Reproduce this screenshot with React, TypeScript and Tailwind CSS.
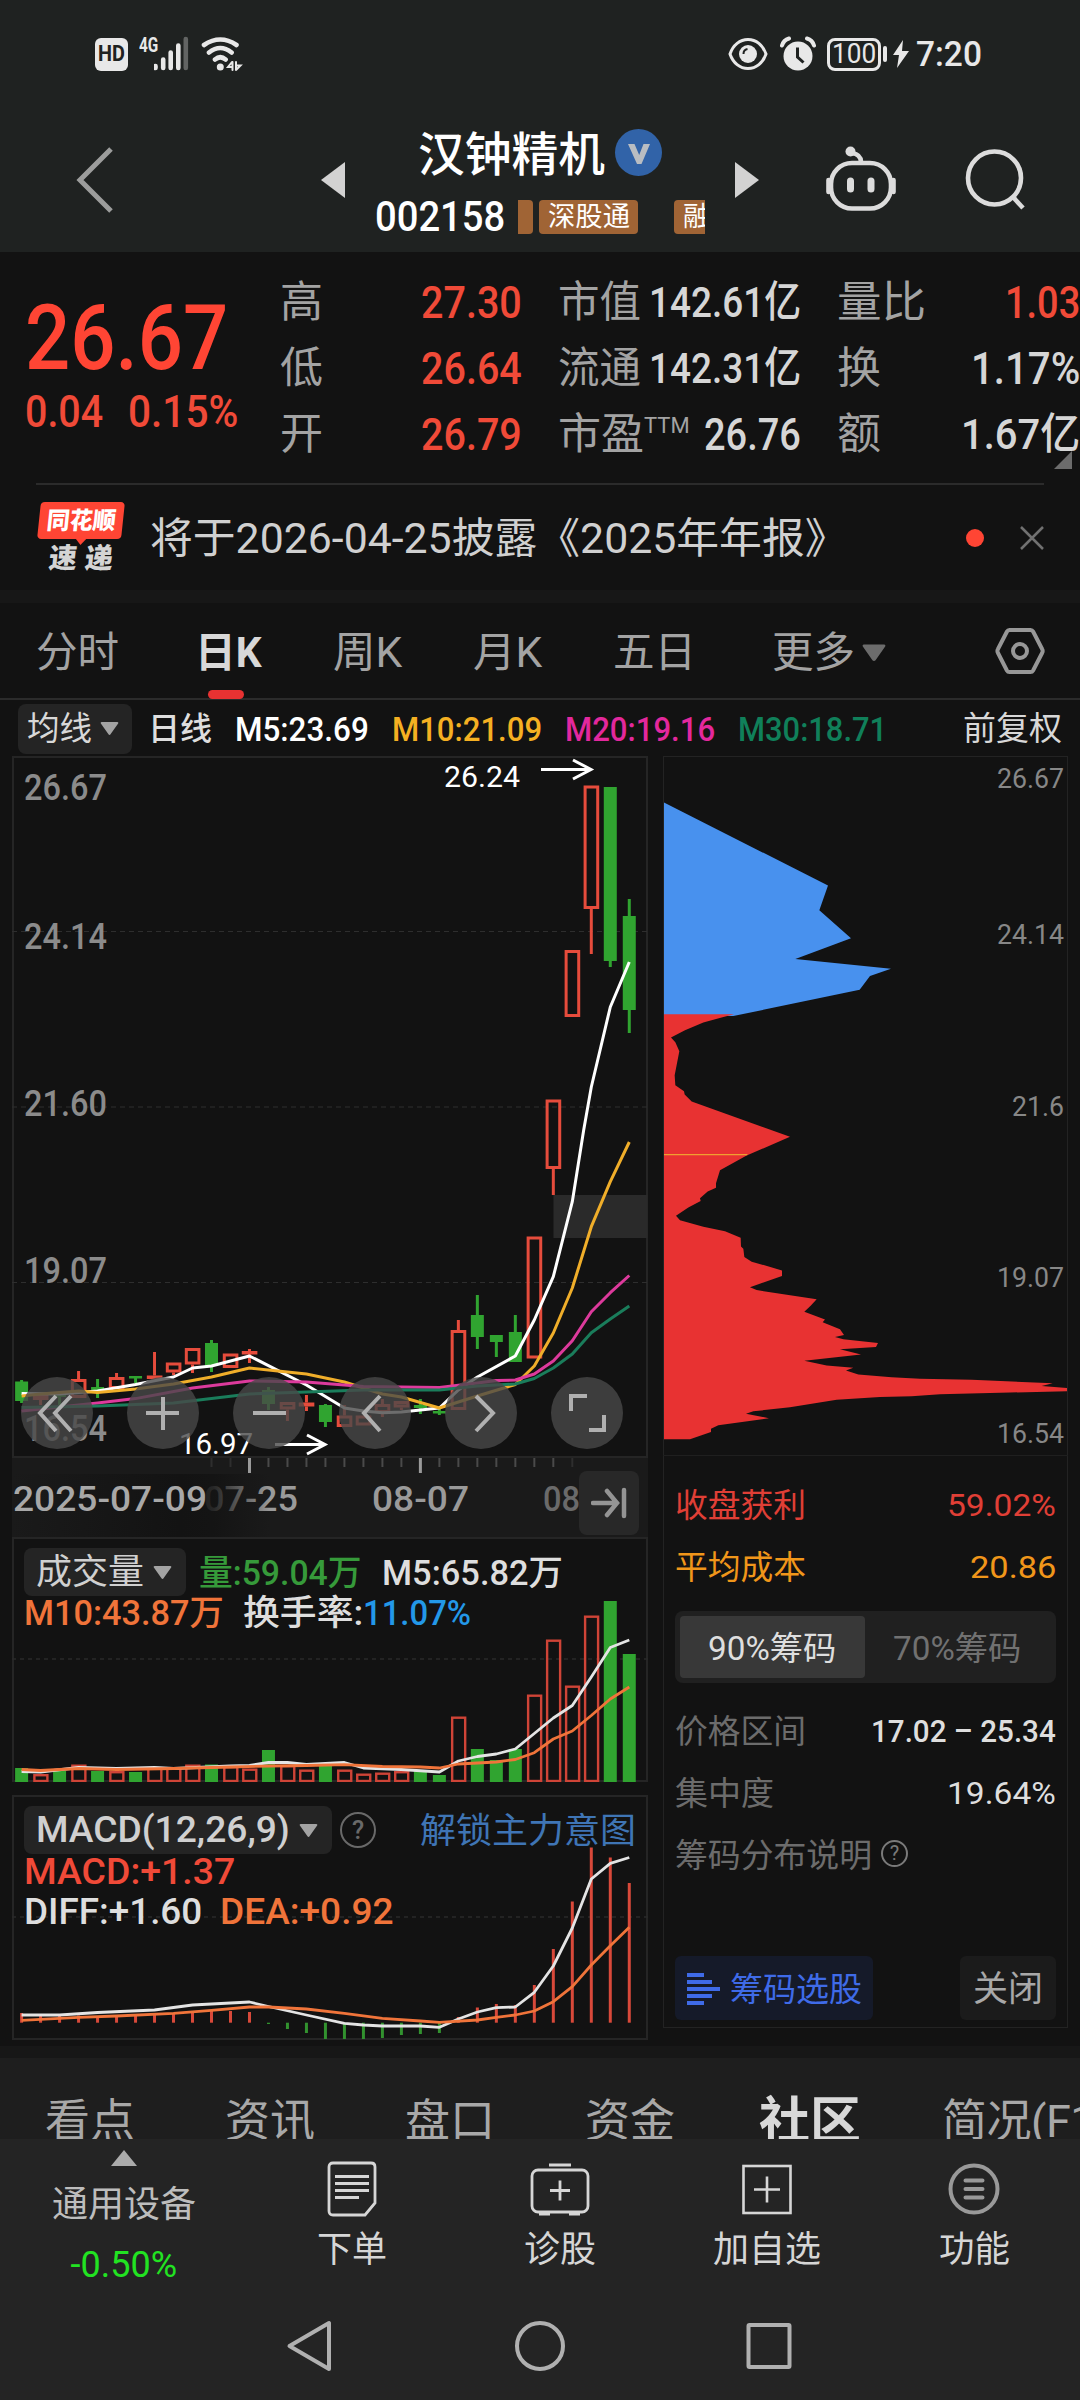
import React, { useLayoutEffect, useRef, useState } from 'react';

interface FitProps {
  className?: string;
  children: React.ReactNode;
}

// Condenses or widens its text to fill the width given by the class
const Fit = ({ className = '', children }: FitProps) => {
  const outer = useRef<HTMLSpanElement>(null);
  const inner = useRef<HTMLSpanElement>(null);
  const [scale, setScale] = useState(1);

  useLayoutEffect(() => {
    if (outer.current && inner.current && inner.current.offsetWidth) {
      setScale(outer.current.clientWidth / inner.current.offsetWidth);
    }
  }, [children]);

  return (
    <span ref={outer} className={`flex shrink-0 leading-none ${className}`}>
      <span ref={inner} className="shrink-0 origin-left whitespace-nowrap leading-none" style={{ transform: `scaleX(${scale})` }}>
        {children}
      </span>
    </span>
  );
};

const RED = '#e64c3c';
const GREEN = '#30a430';

const cx = (i: number) => 21.6 + i * 18.99;

type Pt = [number, number];
const linePath = (pts: Pt[]) => pts.map(([i, y]) => `${cx(i).toFixed(1)},${y}`).join(' ');

// up, body top, body bottom, wick top, wick bottom
type Candle = [boolean, number, number, number, number];
const candles: Candle[] = [
  [false, 1381.5, 1401, 1380, 1403],
  [true, 1395, 1400, 1395, 1405],
  [false, 1395, 1397, 1395, 1405],
  [true, 1379, 1398, 1371, 1398],
  [false, 1387, 1391, 1379, 1398],
  [true, 1377, 1389, 1373, 1389],
  [false, 1376, 1378.5, 1376, 1383],
  [true, 1375.5, 1379, 1352, 1379],
  [true, 1362.5, 1372.5, 1362.5, 1375],
  [true, 1348, 1364.5, 1348, 1373],
  [false, 1343, 1366, 1340, 1372],
  [true, 1353.5, 1368, 1353.5, 1368],
  [true, 1351, 1354, 1349, 1363],
  [false, 1390, 1404, 1387, 1410],
  [true, 1402, 1409.5, 1402, 1421],
  [true, 1402.5, 1406.5, 1395, 1411],
  [false, 1405, 1422, 1404, 1427],
  [true, 1415.5, 1427, 1405, 1427],
  [true, 1415.5, 1425.5, 1415.5, 1425.5],
  [true, 1404, 1413, 1399, 1417],
  [true, 1401, 1407.5, 1401, 1410],
  [false, 1405, 1408, 1399, 1414],
  [false, 1411, 1413.5, 1408, 1415],
  [true, 1330, 1410, 1320, 1410],
  [false, 1315, 1337, 1295, 1349],
  [false, 1335, 1342, 1335, 1357],
  [false, 1332, 1362, 1315, 1362],
  [true, 1236.5, 1358.5, 1236.5, 1358.5],
  [true, 1099.5, 1169, 1099.5, 1195],
  [true, 950, 1017, 950, 1017],
  [true, 785.5, 909, 785.5, 954],
  [false, 787, 961, 787, 967],
  [false, 916, 1010, 899, 1033],
];

const ma5: Pt[] = [[0, 1393.5], [2, 1394], [4, 1391], [6, 1384.5], [8, 1377], [9, 1368], [10, 1366], [12, 1356], [15, 1385], [17, 1408], [18, 1411], [19, 1412.7], [20, 1412], [22, 1408], [23, 1390], [24, 1377], [26, 1356], [27, 1320], [28, 1276.7], [29, 1201.7], [29.6, 1130], [30, 1087], [31, 1007], [32, 962]];
const ma10: Pt[] = [[0, 1396], [1, 1394], [3, 1391], [4, 1392.5], [6, 1389], [8, 1384], [10, 1377], [12, 1368], [15, 1374], [17, 1382], [19, 1394], [20, 1397], [22, 1408], [24, 1396], [26, 1384.5], [27, 1366], [28, 1333], [29, 1288], [30, 1226.7], [31, 1181.7], [32, 1142]];
const ma20: Pt[] = [[0, 1411], [4, 1403], [6, 1398.6], [9, 1388], [12, 1381], [15, 1382], [18, 1386.5], [22, 1387.5], [24, 1383], [25, 1380.5], [26, 1380], [27, 1374], [28, 1361], [29, 1340.7], [30, 1311.7], [31, 1292.7], [32, 1275.5]];
const ma30: Pt[] = [[0, 1407.5], [4, 1406], [8, 1403], [12, 1394], [15, 1392], [18, 1390], [22, 1390], [24, 1386], [26, 1384], [27, 1378.5], [28, 1368], [29, 1354], [30, 1332.7], [31, 1319], [32, 1306]];

const volTops = [1768, 1774, 1771, 1764.5, 1771, 1771, 1772, 1767.5, 1767, 1764.5, 1764.5, 1766, 1768.5, 1750, 1765, 1769.5, 1765, 1769.5, 1773.5, 1772.5, 1771, 1771, 1775, 1716.5, 1749, 1760, 1749, 1694.5, 1639.5, 1685.5, 1615.5, 1601, 1654];
const vol5: Pt[] = [[0, 1771.5], [1, 1772], [3, 1767.5], [5, 1768.5], [7, 1767.5], [8, 1768.5], [11, 1766], [12, 1765.5], [13, 1762.5], [14, 1762.5], [15, 1764.5], [17, 1762.5], [18, 1768], [20, 1769.5], [22, 1772], [23, 1761], [24, 1756.5], [25, 1754], [26, 1749], [27, 1733.5], [28, 1718], [29, 1705.5], [30, 1677], [31, 1647.5], [32, 1640]];
const vol10: Pt[] = [[0, 1769.5], [1, 1770.5], [3, 1768.5], [5, 1769.5], [8, 1768.5], [11, 1767], [13, 1766], [15, 1765.5], [17, 1764.7], [19, 1766.5], [21, 1767], [22, 1768], [23, 1764], [24, 1763], [25, 1762], [26, 1759.5], [27, 1752.7], [28, 1739], [29, 1731], [30, 1715.5], [31, 1699], [32, 1687]];

const macdBars = [2013, 2015, 2016, 2015.5, 2016.5, 2015.5, 2015, 2014, 2013, 2011.5, 2011, 2011, 2012, 2024, 2029, 2033, 2039, 2039, 2039, 2038, 2035, 2034, 2033, 2017, 2007.5, 2004, 2005, 1985, 1949, 1901.5, 1847.5, 1857.5, 1883];
const diff: Pt[] = [[0, 2015], [2, 2015], [4, 2012.5], [7, 2010], [9, 2005], [12, 2002], [13, 2006.5], [15, 2015], [17, 2023.3], [18, 2025], [19, 2026], [21, 2026], [22, 2027.3], [23, 2019], [24, 2012], [25, 2007.7], [26, 2007], [27, 1992.3], [28, 1966], [29, 1928], [30, 1879], [31, 1863.3], [32, 1857.5]];
const dea: Pt[] = [[0, 2020.3], [3, 2017.3], [5, 2016], [8, 2013.3], [10, 2010.3], [12, 2007], [13, 2007], [15, 2009], [17, 2013.3], [19, 2018.3], [21, 2021], [22, 2022.3], [24, 2020], [25, 2017.3], [26, 2015], [27, 2011], [28, 2001.7], [29, 1986.7], [30, 1965], [31, 1945.7], [32, 1927.3]];

const Caret = ({ className = '' }: { className?: string }) => (
  <svg viewBox="0 0 20 14" className={`h-[13px] w-[19px] shrink-0 ${className}`}>
    <path d="M1.5 0h17a1 1 0 0 1 .8 1.6l-8 11.4a1.6 1.6 0 0 1-2.6 0L.7 1.6A1 1 0 0 1 1.5 0Z" fill="currentColor" />
  </svg>
);

const StatusBar = () => (
  <div className="flex h-[108px] items-center pl-[95px] text-[#e8e8e8]">
    <span className="flex h-[33px] w-[33px] items-center justify-center rounded-md bg-[#e8e8e8] text-[#1f2221]">
      <Fit className="w-[27px] text-[22px] font-bold">HD</Fit>
    </span>
    <Fit className="-mt-[18px] ml-[11px] w-[19px] text-[21px] font-bold">4G</Fit>
    <svg viewBox="158 36 36 36" className="-ml-1 h-9 w-9">
      <path d="M159.500 66v2M167.200 59.500v8.500M174.700 52.500v15.500M182.300 45.500v22.500" stroke="#e8e8e8" strokeWidth="4.600" strokeLinecap="round" />
      <path d="M189.800 39v29" stroke="#626463" strokeWidth="4.600" strokeLinecap="round" />
    </svg>
    <svg viewBox="0 0 42 36" className="ml-[11px] h-9 w-[42px]" fill="none" stroke="#e8e8e8" strokeWidth="4.600" strokeLinecap="round">
      <path d="M3 9Q19.300-2 35.500 9M8 16.500q11.300-9 22.600 0M14 23.500q5.300-4.500 10.600 0" />
      <circle cx="19.300" cy="31" r="3.500" fill="#e8e8e8" stroke="none" />
      <path d="M31.500 26v8M31 26l-4 5h4M35 26v8M35.500 29.500h4l-4 4" strokeWidth="2" />
    </svg>
    <svg viewBox="0 0 40 34" className="ml-[485px] h-[34px] w-10" fill="none" stroke="#e8e8e8" strokeWidth="3">
      <path d="M2 17C5 8 12 2.500 20 2.500S35 8 38 17c-3 9-10 14.500-18 14.500S5 26 2 17Z" />
      <circle cx="20" cy="17" r="9" fill="#e8e8e8" stroke="none" />
      <path d="M15.500 17a5 5 0 0 1 4-5" stroke="#1f2221" strokeWidth="2" />
    </svg>
    <svg viewBox="0 0 36 36" className="ml-3 h-9 w-9">
      <circle cx="18" cy="20" r="14.500" fill="#e8e8e8" />
      <path d="M2 9.500C3 6 5.500 3.500 9 2.500M34 9.500C33 6 30.500 3.500 27 2.500" stroke="#e8e8e8" strokeWidth="4" strokeLinecap="round" fill="none" />
      <path d="M17.500 11.500V21l6 5.500" stroke="#1f2221" strokeWidth="3" fill="none" />
    </svg>
    <span className="ml-[11px] flex h-[33px] w-[54px] items-center justify-center rounded-lg border-[3px] border-[#e8e8e8]">
      <Fit className="w-11 text-[28px]">100</Fit>
    </span>
    <span className="ml-0.5 h-4 w-[3.500px] rounded-sm bg-[#e8e8e8]" />
    <svg viewBox="0 0 16 28" className="ml-1.5 h-7 w-4">
      <path d="M10 0 0 15h6l-2 13L16 11H9Z" fill="#e8e8e8" />
    </svg>
    <Fit className="ml-[7px] w-[66px] text-[35px] font-medium">7:20</Fit>
  </div>
);

const Header = () => (
  <div className="flex h-36 items-start">
    <svg viewBox="0 0 40 66" className="ml-[75px] mt-[39px] h-[66px] w-10" fill="none" stroke="#9c9d9c" strokeWidth="5">
      <path d="M36 2 5 33l31 31" />
    </svg>
    <svg viewBox="0 0 24 36" className="ml-[206px] mt-[54px] h-9 w-6">
      <path d="M24 0v36L0 18Z" fill="#d2d2d2" />
    </svg>
    <div className="ml-[30px] flex w-[330px] flex-col">
      <div className="flex h-[88px] items-center pl-[43px]">
        <Fit className="mt-1 w-[187px] text-[47px] font-medium text-white">汉钟精机</Fit>
        <span className="ml-[10px] flex h-[47px] w-[47px] items-center justify-center rounded-full bg-[#3163a8]">
          <svg viewBox="0 0 24 20" className="mt-1 h-5 w-6">
            <path d="M1 0h6.500l4.700 11L16.500 0H23l-8.500 20H10Z" fill="#b9bdc2" />
          </svg>
        </span>
      </div>
      <div className="flex h-[42px] items-center">
        <Fit className="w-[130px] text-[42px] font-medium text-white">002158</Fit>
        <div className="ml-[13px] flex w-[187px] items-center text-[27px] text-white">
          <span className="h-[34px] w-[15px] shrink-0 rounded-r bg-[#a06435]" />
          <span className="ml-1.5 flex h-[34px] w-[99px] shrink-0 items-center justify-center rounded bg-[#a06435]">
            <Fit className="w-[82px] text-[27px]">深股通</Fit>
          </span>
          <span className="ml-9 flex h-[34px] w-[31px] shrink-0 items-center overflow-hidden rounded-l bg-[#a06435] pl-[9px]">
            <span className="shrink-0 leading-none">融</span>
          </span>
        </div>
      </div>
    </div>
    <svg viewBox="0 0 24 36" className="ml-[30px] mt-[54px] h-9 w-6">
      <path d="M0 0v36l24-18Z" fill="#d2d2d2" />
    </svg>
    <svg viewBox="826 146 70 66" className="ml-[67px] mt-[38px] h-[66px] w-[70px]" fill="none" stroke="#dcdcdc" strokeWidth="4.600" strokeLinecap="round">
      <rect x="831" y="163" width="60" height="45.500" rx="21" />
      <path d="M828.500 180v12M893.500 180v12" />
      <path d="M861 162c0-5-3-8-9-9" />
      <circle cx="850.500" cy="151.500" r="5" fill="#dcdcdc" stroke="none" />
      <path d="M850.500 181v8M871 181v8" strokeWidth="7" />
    </svg>
    <svg viewBox="0 0 62 62" className="ml-[69px] mt-[40px] h-[62px] w-[62px]" fill="none" stroke="#dcdcdc" strokeWidth="4.600">
      <circle cx="29.500" cy="30" r="26.500" />
      <path d="M48 49 58 60" />
    </svg>
  </div>
);

const Quote = () => (
  <div className="flex h-[231px] bg-[#121212] font-medium">
    <div className="flex w-[280px] flex-col pl-[25px] text-[#ff4534]">
      <Fit className="mt-[41px] w-[203px] text-[91px]">26.67</Fit>
      <div className="mt-[5px] flex text-[#f04a38]">
        <Fit className="w-[78px] text-[45px]">0.04</Fit>
        <Fit className="ml-[25px] w-[110px] text-[45px]">0.15%</Fit>
      </div>
    </div>
    <div className="flex flex-1 flex-col pt-[17px] text-[43px] text-[#d6d6d6]">
      <div className="flex h-[66px] items-center">
        <Fit className="w-[43px] font-normal text-[#a3a3a3]">高</Fit>
        <Fit className="ml-[98px] w-[101px] text-[45px] text-[#f04a38]">27.30</Fit>
        <div className="ml-[36px] flex w-[243px] items-center justify-between">
          <Fit className="w-[83px] font-normal text-[#a3a3a3]">市值</Fit>
          <Fit className="w-[152px]">142.61亿</Fit>
        </div>
        <div className="ml-[36px] flex w-[243px] items-center justify-between">
          <Fit className="w-[89px] font-normal text-[#a3a3a3]">量比</Fit>
          <Fit className="w-[75px] text-[45px] text-[#f04a38]">1.03</Fit>
        </div>
      </div>
      <div className="flex h-[66px] items-center">
        <Fit className="w-[43px] font-normal text-[#a3a3a3]">低</Fit>
        <Fit className="ml-[98px] w-[101px] text-[45px] text-[#f04a38]">26.64</Fit>
        <div className="ml-[36px] flex w-[243px] items-center justify-between">
          <Fit className="w-[83px] font-normal text-[#a3a3a3]">流通</Fit>
          <Fit className="w-[152px]">142.31亿</Fit>
        </div>
        <div className="ml-[36px] flex w-[243px] items-center justify-between">
          <Fit className="w-[44px] font-normal text-[#a3a3a3]">换</Fit>
          <Fit className="w-[109px] text-[45px]">1.17%</Fit>
        </div>
      </div>
      <div className="relative flex h-[66px] items-center">
        <Fit className="w-[43px] font-normal text-[#a3a3a3]">开</Fit>
        <Fit className="ml-[98px] w-[101px] text-[45px] text-[#f04a38]">26.79</Fit>
        <div className="ml-[36px] flex w-[243px] items-center">
          <Fit className="w-[86px] font-normal text-[#a3a3a3]">市盈</Fit>
          <Fit className="-mt-4 w-[46px] text-[22px] font-normal text-[#a3a3a3]">TTM</Fit>
          <Fit className="ml-[14px] w-[97px] text-[45px]">26.76</Fit>
        </div>
        <div className="ml-[36px] flex w-[243px] items-center justify-between">
          <Fit className="w-[44px] font-normal text-[#a3a3a3]">额</Fit>
          <Fit className="w-[119px]">1.67亿</Fit>
        </div>
        <svg viewBox="0 0 18 18" className="absolute -bottom-[2px] right-2 h-[18px] w-[18px]">
          <path d="M18 0v18H0Z" fill="#6c6c6c" />
        </svg>
      </div>
    </div>
  </div>
);

const NewsRow = () => (
  <div className="mx-9 flex h-[107px] items-center border-t-2 border-[#2b2b2b]">
    <div className="flex w-[90px] flex-col items-center">
      <div className="relative flex h-[37px] w-[84px] -skew-x-6 items-center justify-center rounded bg-[#ff4534] text-white">
        <Fit className="w-[69px] text-[24px] font-black">同花顺</Fit>
        <svg viewBox="0 0 12 7" className="absolute -bottom-1.5 left-[38px] h-[7px] w-3">
          <path d="M0 0h12L6 7Z" fill="#ff4534" />
        </svg>
      </div>
      <div className="mt-1.5 flex -skew-x-6 gap-2 text-[28px] font-black text-[#d4d4d4]">
        <Fit className="w-[28px]">速</Fit>
        <Fit className="w-[28px]">递</Fit>
      </div>
    </div>
    <Fit className="ml-6 mt-0.5 w-[697px] text-[42px] text-[#d0d0d0]">将于2026-04-25披露《2025年年报》</Fit>
    <span className="ml-[119px] h-[18px] w-[18px] rounded-full bg-[#ff4534]" />
    <svg viewBox="0 0 24 24" className="ml-9 h-6 w-6" stroke="#717171" strokeWidth="2.500">
      <path d="M1 1l22 22M23 1 1 23" />
    </svg>
  </div>
);

const PeriodTabs = () => (
  <div className="flex h-[97px] items-center border-b-2 border-[#2b2b2b] pl-9 pt-1 text-[42px] text-[#a3a3a3]">
    <Fit className="w-[83px]">分时</Fit>
    <div className="relative ml-[76px] flex h-full items-center">
      <Fit className="w-[67px] font-bold text-[#d8d8d8]">日K</Fit>
      <span className="absolute -bottom-px left-[13px] h-[9px] w-9 rounded-full bg-[#e83232]" />
    </div>
    <Fit className="ml-[71px] w-[69px]">周K</Fit>
    <Fit className="ml-[71px] w-[69px]">月K</Fit>
    <Fit className="ml-[71px] w-[83px]">五日</Fit>
    <Fit className="ml-[76px] w-[83px]">更多</Fit>
    <Caret className="ml-[7px] h-[18px] w-[24px] text-[#6c6c6c]" />
    <svg viewBox="0 0 50 48" className="-mt-1 ml-[109px] h-12 w-[50px]" fill="none" stroke="#979797" strokeWidth="4">
      <path d="M14.500 3h21a3 3 0 0 1 2.600 1.500l9 17.500a4 4 0 0 1 0 4l-9 17.500a3 3 0 0 1-2.600 1.500h-21a3 3 0 0 1-2.600-1.500L3 26a4 4 0 0 1 0-4l9-17.500A3 3 0 0 1 14.500 3Z" />
      <circle cx="25" cy="24" r="7" />
    </svg>
  </div>
);

const MaLegend = () => (
  <div className="flex h-14 items-center pl-[18px] pt-px text-[34px] font-medium">
    <span className="flex h-[50px] w-[114px] items-center rounded-lg bg-[#242424] pl-[9px]">
      <Fit className="w-[65px] text-[33px] font-normal text-[#d8d8d8]">均线</Fit>
      <Caret className="ml-2 text-[#a3a3a3]" />
    </span>
    <Fit className="ml-4 w-[64px] text-[32px] text-[#dedede]">日线</Fit>
    <Fit className="ml-[23px] w-[134px] text-white">M5:23.69</Fit>
    <Fit className="ml-[23px] w-[150px] text-[#f5b022]">M10:21.09</Fit>
    <Fit className="ml-[23px] w-[150px] text-[#e3289d]">M20:19.16</Fit>
    <Fit className="ml-[23px] w-[149px] text-[#10805a]">M30:18.71</Fit>
    <Fit className="ml-[76px] w-[99px] text-[33px] font-normal text-[#d8d8d8]">前复权</Fit>
  </div>
);

const priceLabels = [
  { text: '26.67', y: 800 },
  { text: '24.14', y: 949 },
  { text: '21.60', y: 1115.5 },
  { text: '19.07', y: 1282.5 },
  { text: '16.54', y: 1440.5 },
];

const controls = [
  'M35 19 19 36l16 18M50 19 34 36l16 18',
  'M36 20v33M19 36h33',
  'M20 36h33',
  'M41 19 25 36l16 18',
  'M31 19l17 17-17 18',
  'M20 34V19h16M53 38v15H38',
];

const PriceChart = () => (
  <div className="relative h-[702px]">
    <svg viewBox="12 756 636 702" className="h-[702px] w-[636px]">
      <rect x="13" y="757" width="634" height="700" fill="none" stroke="#252525" strokeWidth="2" />
      {[931.5, 1107, 1282.5].map((y) => (
        <path key={y} d={`M12 ${y}H648`} stroke="#2e2e2e" strokeDasharray="5 4" />
      ))}
      {priceLabels.map((l) => (
        <text key={l.text} x="24" y={l.y} textLength="83" lengthAdjust="spacingAndGlyphs" fontSize="37" fontWeight="500" fill="#8b8b8b">
          {l.text}
        </text>
      ))}
      <rect x="553.500" y="1195" width="94" height="43" fill="#2a2a2a" />
      {candles.map(([up, t, b, wt, wb], i) => (
        <g key={i}>
          {up ? (
            <>
              <path d={`M${cx(i)} ${wt}V${t}M${cx(i)} ${b}V${wb}`} stroke={RED} strokeWidth="3" />
              <rect x={cx(i) - 6.2} y={t + 1.5} width="12.600" height={Math.max(b - t - 3, 0.5)} fill="none" stroke={RED} strokeWidth="3" />
            </>
          ) : (
            <>
              <path d={`M${cx(i)} ${wt}V${wb}`} stroke={GREEN} strokeWidth="3" />
              <rect x={cx(i) - 6.5} y={t} width="13" height={b - t} fill={GREEN} />
            </>
          )}
        </g>
      ))}
      <g fill="none" strokeWidth="3" strokeLinejoin="round">
        <polyline points={linePath(ma5)} stroke="#fff" />
        <polyline points={linePath(ma10)} stroke="#f0ae2a" />
        <polyline points={linePath(ma20)} stroke="#dd3a9c" />
        <polyline points={linePath(ma30)} stroke="#1a7d5b" />
      </g>
      <g fill="#fff" fontSize="30">
        <text x="444" y="787" textLength="76" lengthAdjust="spacingAndGlyphs">26.24</text>
        <text x="179" y="1454" textLength="74" lengthAdjust="spacingAndGlyphs">16.97</text>
      </g>
      <path d="M541 769.500h49M573 760l18 9.500-18 9.500M275 1444.500h49M307 1435l18 9.500-18 9.500" fill="none" stroke="#fff" strokeWidth="3" />
    </svg>
    <div className="absolute bottom-[9px] left-[9px] flex gap-[34px]">
      {controls.map((d) => (
        <span key={d} className="h-[72px] w-[72px] rounded-full bg-[#484848]/80">
          <svg viewBox="0 0 72 72" fill="none" stroke="#b0b0b0" strokeWidth="4">
            <path d={d} />
          </svg>
        </span>
      ))}
    </div>
  </div>
);

const TimeAxis = () => (
  <div className="relative h-[79px] bg-[#1a1a1a]">
    <svg viewBox="12 1458 636 79" className="h-[79px] w-[636px]">
      <defs>
        <linearGradient id="fade">
          <stop offset="0" stopColor="#1a1a1a" />
          <stop offset="0.650" stopColor="#131313" />
          <stop offset="0.780" stopColor="#131313" stopOpacity="0.850" />
          <stop offset="1" stopColor="#131313" stopOpacity="0" />
        </linearGradient>
      </defs>
      {Array.from({ length: 20 }, (_, k) => k + 10).map((i) => (
        <path
          key={i}
          d={`M${cx(i)} 1458v${i === 12 || i === 21 ? 15 : 9}`}
          stroke={i === 12 || i === 21 ? '#9a9a9a' : i < 12 || i > 28 ? '#2e2e2e' : '#4a4a4a'}
          strokeWidth={i === 12 || i === 21 ? 3 : 2}
        />
      ))}
      <g fontSize="35" fontWeight="500" fill="#9a9a9a">
        <text x="204" y="1511" textLength="94" lengthAdjust="spacingAndGlyphs">07-25</text>
        <text x="372" y="1511" textLength="97" lengthAdjust="spacingAndGlyphs">08-07</text>
        <text x="543" y="1511" textLength="37" lengthAdjust="spacingAndGlyphs" fill="#6a6a6a">08</text>
        <rect x="12" y="1474" width="258" height="63" fill="url(#fade)" />
        <text x="13" y="1511" textLength="194" lengthAdjust="spacingAndGlyphs" fill="#a8a8a8">2025-07-09</text>
      </g>
    </svg>
    <span className="absolute right-[9px] top-[13px] flex h-16 w-[60px] items-center justify-center rounded-lg bg-[#282828]">
      <svg viewBox="0 0 36 32" className="h-8 w-9" fill="none" stroke="#949494" strokeWidth="4.500" strokeLinecap="round">
        <path d="M2 16h24M16 4l10 12-10 12M33 3v26" />
      </svg>
    </span>
  </div>
);

const VolumeChart = () => (
  <div className="relative h-[245px]">
    <svg viewBox="12 1537 636 245" className="absolute inset-0 h-[245px] w-[636px]">
      <rect x="13" y="1538" width="634" height="243" fill="none" stroke="#252525" strokeWidth="2" />
      <path d="M12 1659H648" stroke="#2a2a2a" strokeWidth="1.500" strokeDasharray="4 4" />
      {volTops.map((t, i) =>
        candles[i][0] ? (
          <rect key={i} x={cx(i) - 6.2} y={t + 1.2} width="13" height={1781 - t - 1.2} fill="none" stroke="#cf4437" strokeWidth="2.400" />
        ) : (
          <rect key={i} x={cx(i) - 6.5} y={t} width="13" height={1782 - t} fill={GREEN} />
        )
      )}
      <g fill="none" strokeWidth="2.800" strokeLinejoin="round">
        <polyline points={linePath(vol5)} stroke="#e4e4e4" />
        <polyline points={linePath(vol10)} stroke="#f0743a" />
      </g>
    </svg>
    <div className="relative pl-3 pt-[11px] font-medium">
      <div className="flex h-12 items-center text-[35px]">
        <span className="flex h-12 w-[162px] items-center rounded-lg bg-[#242424] pl-3 pt-px">
          <Fit className="w-[108px] font-normal text-[#d0d0d0]">成交量</Fit>
          <Caret className="ml-[9px] text-[#a3a3a3]" />
        </span>
        <Fit className="ml-[13px] mt-0.5 w-[163px] text-[#369a3a]">量:59.04万</Fit>
        <Fit className="ml-5 mt-0.5 w-[181px] text-[#dedede]">M5:65.82万</Fit>
      </div>
      <div className="-mt-px flex h-[37px] items-center text-[35px]">
        <Fit className="w-[200px] text-[#f0743a]">M10:43.87万</Fit>
        <Fit className="ml-[19px] w-[120px] text-[#dedede]">换手率:</Fit>
        <Fit className="w-[108px] text-[#2398e8]">11.07%</Fit>
      </div>
    </div>
  </div>
);

const MacdChart = () => (
  <div className="relative mt-[13px] h-[245px]">
    <svg viewBox="12 1795 636 245" className="absolute inset-0 h-[245px] w-[636px]">
      <rect x="13" y="1796" width="634" height="243" fill="none" stroke="#252525" strokeWidth="2" />
      <path d="M12 1917H648" stroke="#2a2a2a" strokeWidth="1.500" strokeDasharray="4 4" />
      {macdBars.map((t, i) => (
        <path key={i} d={`M${cx(i)} 2022.700V${t}`} stroke={t < 2022.7 ? '#d8493a' : '#32922f'} strokeWidth="3" />
      ))}
      <g fill="none" strokeWidth="2.800" strokeLinejoin="round">
        <polyline points={linePath(diff)} stroke="#e4e4e4" />
        <polyline points={linePath(dea)} stroke="#f0743a" />
      </g>
    </svg>
    <div className="relative pl-3 pt-[11px] font-medium">
      <div className="flex h-12 items-center text-[36px]">
        <span className="flex h-12 w-[308px] items-center rounded-lg bg-[#242424] pl-3">
          <Fit className="w-[254px] text-[#d0d0d0]">MACD(12,26,9)</Fit>
          <Caret className="ml-[9px] text-[#a3a3a3]" />
        </span>
        <span className="ml-2 flex h-9 w-9 items-center justify-center rounded-full border-[2.500px] border-[#696969] text-[25px] leading-none text-[#696969]">?</span>
        <Fit className="ml-[44px] mt-0.5 w-[216px] text-[35px] font-normal text-[#3f75b5]">解锁主力意图</Fit>
      </div>
      <div className="-mt-0.5 flex h-10 items-center text-[36px]">
        <Fit className="w-[211px] text-[#f04a38]">MACD:+1.37</Fit>
      </div>
      <div className="flex h-10 items-center text-[36px]">
        <Fit className="w-[178px] text-[#dedede]">DIFF:+1.60</Fit>
        <Fit className="ml-[18px] w-[174px] text-[#f0743a]">DEA:+0.92</Fit>
      </div>
    </div>
  </div>
);

const chipLabels = [
  { text: '26.67', y: 787.5, w: 67 },
  { text: '24.14', y: 943.5, w: 67 },
  { text: '21.6', y: 1115.5, w: 52 },
  { text: '19.07', y: 1287, w: 67 },
  { text: '16.54', y: 1443, w: 67 },
];

const ChipDistribution = () => (
  <svg viewBox="663 756 405 700" className="block h-[700px] w-[405px]">
    {/* the profile is drawn on its own finer grid */}
    <g transform="translate(640 740) scale(0.33333 0.45920)">
      <path d="M72 136 564 317 538 371 633 432 466 477 753 498 690 514 659 544 280 601H72Z" fill="#4891ee" />
      <path
        d="M72 597H282L190 615 135 632 93 648 106 658 118 678 104 730 106 752 132 765 134 772 155 787 450 864 320 905 240 937 228 965V975L203 983 180 998 182 1004 145 1018 108 1036 120 1046 190 1060 255 1070 302 1084 303 1103 310 1108 313 1126 335 1136 426 1155V1167L330 1192 350 1198 530 1218 512 1232 493 1245 555 1262 548 1268 600 1283 612 1296 585 1300 610 1305 714 1313 708 1322 600 1327 663 1338 493 1352 560 1362 640 1367 618 1373 655 1382 755 1388 840 1391 995 1393 1238 1401 1205 1407 1281 1411V1418L1110 1421 900 1425 815 1429 720 1431 590 1437 450 1453 340 1462 318 1467 387 1477 235 1492 213 1500V1507L150 1523H72Z"
        fill="#e83232"
      />
      <path d="M72 903H322" stroke="#f0a030" strokeWidth="3" />
    </g>
    {chipLabels.map((l) => (
      <text key={l.text} x={1064 - l.w} y={l.y} textLength={l.w} lengthAdjust="spacingAndGlyphs" fontSize="28" fill="#878787">
        {l.text}
      </text>
    ))}
    <path d="M663 1455.500H1068" stroke="#1f1f1f" />
  </svg>
);

const ChipPanel = () => (
  <div className="flex h-[1272px] w-[405px] flex-col border border-[#232323]">
    <div className="-ml-px -mt-px">
      <ChipDistribution />
    </div>
    <div className="flex flex-col pl-[11px] pr-[11px] text-[33px]">
      <div className="mt-[18px] flex h-[62px] items-center justify-between text-[#e03f36]">
        <Fit className="w-[131px]">收盘获利</Fit>
        <Fit className="w-[109px] text-[32px]">59.02%</Fit>
      </div>
      <div className="flex h-[62px] items-center justify-between text-[#f0961a]">
        <Fit className="w-[131px]">平均成本</Fit>
        <Fit className="w-[86px] text-[32px]">20.86</Fit>
      </div>
      <div className="mt-[13px] flex h-[72px] rounded-lg bg-[#202020] p-[5px]">
        <span className="flex h-[62px] w-[185px] items-center justify-center rounded bg-[#383838] pr-0.5 pt-0.5 text-[#dedede]">
          <Fit className="w-[128px] text-[33px]">90%筹码</Fit>
        </span>
        <span className="flex flex-1 items-center justify-center pr-0.5 pt-0.5 text-[#717171]">
          <Fit className="w-[128px] text-[33px]">70%筹码</Fit>
        </span>
      </div>
      <div className="mt-[17px] flex h-[62px] items-center justify-between text-[#6c6c6c]">
        <Fit className="w-[131px]">价格区间</Fit>
        <Fit className="w-[185px] text-[32px] font-medium text-[#dedede]">17.02 – 25.34</Fit>
      </div>
      <div className="flex h-[62px] items-center justify-between text-[#6c6c6c]">
        <Fit className="w-[99px]">集中度</Fit>
        <Fit className="w-[109px] text-[32px] text-[#dedede]">19.64%</Fit>
      </div>
      <div className="flex h-[62px] items-center text-[#6c6c6c]">
        <Fit className="w-[197px]">筹码分布说明</Fit>
        <span className="-mt-1 ml-[9px] flex h-[27px] w-[27px] items-center justify-center rounded-full border-2 border-[#7a7a7a] text-[20px] leading-none text-[#7a7a7a]">?</span>
      </div>
      <div className="mt-[70px] flex h-16 items-center justify-between">
        <span className="flex h-16 w-[198px] items-center rounded-md bg-[#151a29] pl-3 pt-0.5 text-[#3f6be8]">
          <svg viewBox="0 0 34 34" className="mr-[9px] h-[34px] w-[34px]" stroke="currentColor" strokeWidth="4">
            <path d="M0 3h17M0 10h25M0 17h33M0 24h25M0 31h17" />
          </svg>
          <Fit className="w-[132px]">筹码选股</Fit>
        </span>
        <span className="flex h-16 w-24 items-center justify-center rounded-md bg-[#1b1b1b] pt-0.5 text-[#a8a8a8]">
          <Fit className="w-[70px] text-[35px]">关闭</Fit>
        </span>
      </div>
    </div>
  </div>
);

const SectionTabs = () => (
  <div className="h-[81px] overflow-hidden bg-[#1e1e1e]">
    <div className="flex h-[126px] items-center pl-[45px] text-[45px] text-[#a8a8a8]">
      <Fit className="w-[90px]">看点</Fit>
      <Fit className="ml-[90px] w-[90px]">资讯</Fit>
      <Fit className="ml-[90px] w-[90px]">盘口</Fit>
      <Fit className="ml-[90px] w-[90px]">资金</Fit>
      <Fit className="ml-[84px] w-[102px] text-[51px] font-bold text-[#d8d8d8]">社区</Fit>
      <span className="ml-[81px] shrink-0 whitespace-nowrap leading-none tracking-[-0.500px]">简况(F10)</span>
    </div>
  </div>
);

const ActionBar = () => (
  <div className="flex h-[164px] text-[36px] text-[#d6d6d6]">
    <div className="flex w-[248px] flex-col items-center pt-[11px]">
      <svg viewBox="0 0 26 16" className="h-4 w-[26px]">
        <path d="M13 0 26 16H0Z" fill="#ababab" />
      </svg>
      <Fit className="mt-[21px] w-[144px] text-[#bdbdbd]">通用设备</Fit>
      <Fit className="mt-[24px] w-[107px] text-[#22e322]">-0.50%</Fit>
    </div>
    <div className="flex w-[208px] flex-col items-center pt-[22px]">
      <svg viewBox="0 0 50 56" className="h-14 w-[50px]" fill="none" stroke="currentColor" strokeWidth="2.800">
        <path d="M6 2h38c2.500 0 4 1.500 4 4v36L38 54H6c-2.500 0-4-1.500-4-4V6c0-2.500 1.500-4 4-4Z" />
        <path d="M8 15.500h34M8 22.500h34M8 29.500h34M8 36.500h24" />
      </svg>
      <Fit className="mt-[15px] w-[70px]">下单</Fit>
    </div>
    <div className="flex w-[208px] flex-col items-center pt-[22px]">
      <svg viewBox="0 0 60 56" className="h-14 w-[60px]" fill="none" stroke="currentColor" strokeWidth="2.800">
        <rect x="2" y="9" width="56" height="42" rx="6" />
        <path d="M19 4h22M9 53h11M39 53h11M20 29.500h20M30 19.500v20" />
      </svg>
      <Fit className="mt-[15px] w-[72px]">诊股</Fit>
    </div>
    <div className="flex w-[206px] flex-col items-center pt-[22px]">
      <svg viewBox="0 0 50 56" className="h-14 w-[50px]" fill="none" stroke="currentColor" strokeWidth="2.600">
        <rect x="1.500" y="5" width="47" height="47" />
        <path d="M12 28.500h26M25 15.500v26" />
      </svg>
      <Fit className="mt-[15px] w-[108px]">加自选</Fit>
    </div>
    <div className="flex w-52 flex-col items-center pt-[22px]">
      <svg viewBox="0 0 54 56" className="h-14 w-[54px]" fill="none" stroke="#999" strokeWidth="4">
        <circle cx="27" cy="28" r="23.500" />
        <path d="M18.500 19.500h17M18.500 28h17M18.500 36.500h17" strokeLinecap="round" />
      </svg>
      <Fit className="mt-[15px] w-[71px]">功能</Fit>
    </div>
  </div>
);

const SystemNav = () => (
  <div className="flex h-[97px] items-start pl-[285px] pt-[15px]">
    <svg viewBox="285 2318 510 56" className="h-14 w-[510px]" fill="none" stroke="#b0b0b0" strokeWidth="4" strokeLinejoin="round">
      <path d="M329 2323v46L289.500 2346Z" />
      <circle cx="540" cy="2346" r="23" />
      <rect x="748.500" y="2325" width="41" height="42" rx="1" />
    </svg>
  </div>
);

const App = () => (
  <div className="flex h-[2400px] w-[1080px] flex-col overflow-hidden bg-[#121212] font-['Roboto','Noto_Sans_CJK_SC',sans-serif]">
    <div className="h-[252px] shrink-0 bg-[#1f2221]">
      <StatusBar />
      <Header />
    </div>
    <Quote />
    <NewsRow />
    <div className="h-[13px] bg-[#171717]" />
    <PeriodTabs />
    <MaLegend />
    <div className="flex h-[1290px] shrink-0 gap-[15px] pl-3">
      <div className="w-[636px] shrink-0">
        <PriceChart />
        <TimeAxis />
        <VolumeChart />
        <MacdChart />
      </div>
      <ChipPanel />
    </div>
    <div className="h-3 bg-[#171717]" />
    <SectionTabs />
    <div className="h-[261px] shrink-0 bg-[#242424]">
      <ActionBar />
      <SystemNav />
    </div>
  </div>
);

export default App;
